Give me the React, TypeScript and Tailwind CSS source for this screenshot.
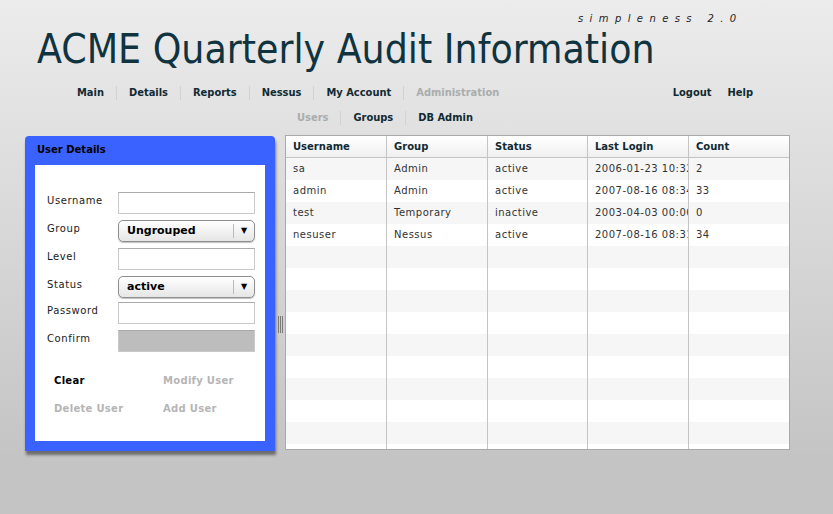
import React from "react";

const users = [
  { name: "sa", group: "Admin", status: "active", login: "2006-01-23 10:32:11", count: "2" },
  { name: "admin", group: "Admin", status: "active", login: "2007-08-16 08:34:02", count: "33" },
  { name: "test", group: "Temporary", status: "inactive", login: "2003-04-03 00:00:00", count: "0" },
  { name: "nesuser", group: "Nessus", status: "active", login: "2007-08-16 08:31:45", count: "34" },
];

const navMain = ["Main", "Details", "Reports", "Nessus", "My Account", "Administration"];
const navSub = ["Users", "Groups", "DB Admin"];

const NavRow = ({ items, muted }: { items: string[]; muted: string }) => (
  <div className="flex items-center">
    {items.map((item, i) => (
      <React.Fragment key={item}>
        {i > 0 && <span className="w-px h-[14px] bg-[#d2d2d2]" />}
        <span
          className={`${i === 0 ? "pr-[12px]" : "px-[12px]"} font-bold ${item === muted ? "text-[#a9adae]" : "text-[#102a33]"}`}
        >
          {item}
        </span>
      </React.Fragment>
    ))}
  </div>
);

const TextField = ({ disabled }: { disabled?: boolean }) => (
  <div
    className={`w-[137px] h-[22px] border border-[#c9c9c9] border-t-[#a9a9a9] ${disabled ? "bg-[#bdbdbd]" : "bg-white"}`}
  />
);

const SelectField = ({ value }: { value: string }) => (
  <div className="w-[137px] h-[22px] flex items-center rounded-[5px] border border-[#8e8e8e] bg-gradient-to-b from-white to-[#e6e6e6] shadow-[0_1px_1px_rgba(0,0,0,0.25)]">
    <span className="flex-1 pl-[8px] font-bold text-[11px] text-black">{value}</span>
    <span className="w-px h-[14px] bg-[#b8b8b8]" />
    <span className="w-[20px] text-center text-[8px] text-black">▼</span>
  </div>
);

const FormRow = ({ label, children, className = "" }: { label: string; children: React.ReactNode; className?: string }) => (
  <div className={`flex items-start h-[22px] ${className}`}>
    <span className="w-[71px] text-[10px] tracking-[0.6px] text-[#1a1a1a] leading-[18px]">{label}</span>
    {children}
  </div>
);

export default function App() {
  const rows = Array.from({ length: 14 }, (_, i) => users[i]);

  return (
    <div className="w-[833px] h-[514px] overflow-hidden bg-[linear-gradient(to_bottom,#ececec_0px,#c4c4c4_460px)] font-['DejaVu_Sans',sans-serif]">
      {/* header */}
      <div className="h-[83px]">
        <div className="pt-[13px] pl-[578px] text-[10px] leading-[12px] italic tracking-[6.4px] text-[#222]">
          simpleness 2.0
        </div>
        <h1 className="pl-[37px] mt-[4px] text-[40.5px] leading-[40px] text-[#0f3440] font-['DejaVu_Sans_Condensed','DejaVu_Sans',sans-serif] [font-stretch:condensed]">
          ACME Quarterly Audit Information
        </h1>
      </div>

      {/* navigation */}
      <div className="h-[20px] flex items-center text-[11px] font-['DejaVu_Sans_Condensed','DejaVu_Sans',sans-serif] [font-stretch:condensed]">
        <div className="pl-[77px]">
          <NavRow items={navMain} muted="Administration" />
        </div>
        <div className="ml-auto pr-[80px] flex gap-[16px] font-bold text-[#102a33]">
          <span>Logout</span>
          <span>Help</span>
        </div>
      </div>
      <div className="h-[20px] mt-[5px] flex items-center pl-[297px] text-[11px] font-['DejaVu_Sans_Condensed','DejaVu_Sans',sans-serif] [font-stretch:condensed]">
        <NavRow items={navSub} muted="Users" />
      </div>

      {/* content */}
      <div className="flex mt-[7px]">
        {/* user details panel */}
        <div className="ml-[25px] w-[250px] h-[315px] mt-[1px] flex flex-col rounded-t-[4px] bg-[#3a62ff] shadow-[1px_4px_3px_rgba(0,0,0,0.45)]">
          <div className="h-[29px] pl-[12px] pb-[2px] flex items-center text-[10px] font-bold text-black">User Details</div>
          <div className="mx-[10px] mb-[10px] flex-1 bg-white pt-[27px] pl-[12px]">
            <div className="flex flex-col gap-[6px]">
              <FormRow label="Username"><TextField /></FormRow>
              <FormRow label="Group"><SelectField value="Ungrouped" /></FormRow>
              <FormRow label="Level"><TextField /></FormRow>
              <FormRow label="Status"><SelectField value="active" /></FormRow>
              <FormRow label="Password" className="-mt-[2px]"><TextField /></FormRow>
              <FormRow label="Confirm"><TextField disabled /></FormRow>
            </div>
            <div className="mt-[22px] pl-[7px] grid grid-cols-[109px_1fr] gap-y-[15px] text-[10px] font-bold tracking-[0.3px] leading-[13px]">
              <span className="text-black">Clear</span>
              <span className="text-[#b5b5b5]">Modify User</span>
              <span className="text-[#b5b5b5]">Delete User</span>
              <span className="text-[#b5b5b5]">Add User</span>
            </div>
          </div>
        </div>

        {/* splitter */}
        <div className="w-[10px] flex justify-center pt-[181px]">
          <div className="flex gap-[1px] h-[17px]">
            <span className="w-px bg-[#7a7a7a]" />
            <span className="w-px bg-[#7a7a7a]" />
            <span className="w-px bg-[#7a7a7a]" />
          </div>
        </div>

        {/* users table */}
        <div className="w-[505px] h-[315px] overflow-hidden border border-[#a9a9a9] bg-white">
          <div className="grid grid-cols-[101px_101px_100px_101px_1fr] h-[22px] border-b border-[#c4c4c4] bg-gradient-to-b from-white to-[#f0f0f0] text-[10px] font-bold text-[#102a33]">
            {["Username", "Group", "Status", "Last Login", "Count"].map((h, i) => (
              <div key={h} className={`pl-[7px] flex items-center ${i < 4 ? "border-r border-[#c4c4c4]" : ""}`}>{h}</div>
            ))}
          </div>
          {rows.map((u, r) => (
            <div
              key={r}
              className={`grid grid-cols-[101px_101px_100px_101px_1fr] h-[22px] text-[10px] tracking-[0.5px] text-[#333] ${r % 2 === 0 ? "bg-[#f6f6f6]" : "bg-white"}`}
            >
              {[u?.name, u?.group, u?.status, u?.login, u?.count].map((c, i) => (
                <div
                  key={i}
                  className={`pl-[7px] pb-[1px] flex items-center overflow-hidden whitespace-nowrap ${i < 4 ? "border-r border-[#c4c4c4]" : ""}`}
                >
                  {c ?? ""}
                </div>
              ))}
            </div>
          ))}
        </div>
      </div>
    </div>
  );
}
